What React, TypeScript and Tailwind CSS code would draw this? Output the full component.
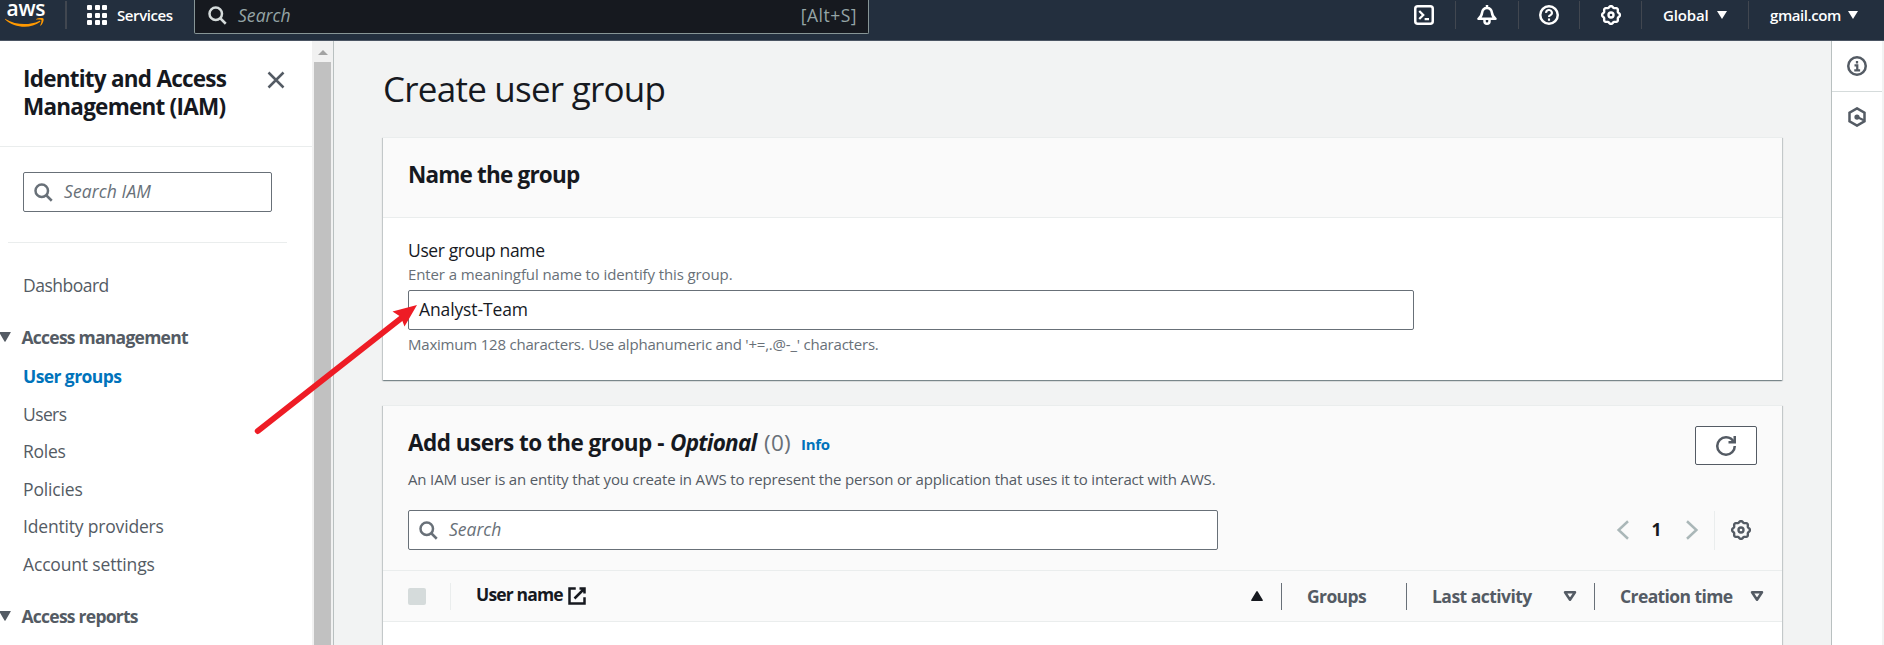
import React from "react";

type IconProps = { className?: string; children: React.ReactNode };

function Icon({ className = "size-5", children }: IconProps) {
  return (
    <svg viewBox="0 0 16 16" fill="none" stroke="currentColor" strokeWidth="2" className={`block shrink-0 ${className}`}>
      {children}
    </svg>
  );
}

const gearPath =
  Array.from({ length: 96 }, (_, i) => {
    const a = (i / 96) * Math.PI * 2;
    const r = 6.6 + 0.6 * Math.cos(8 * a);
    return `${i ? "L" : "M"}${(8 + r * Math.cos(a)).toFixed(2)} ${(8 + r * Math.sin(a)).toFixed(2)}`;
  }).join("") + "Z";

const Gear = () => (
  <Icon>
    <path d={gearPath} strokeWidth="1.9" strokeLinejoin="round" />
    <circle cx="8" cy="8" r="2" strokeWidth="1.9" />
  </Icon>
);

const SearchIcon = () => (
  <Icon>
    <circle cx="7" cy="7" r="5" />
    <path d="M10.6 10.6 15 15" />
  </Icon>
);

const SortDown = () => (
  <Icon>
    <path d="M4 5h8l-4 6z" strokeLinejoin="round" />
  </Icon>
);

function Logo() {
  return (
    <div className="ml-[5px] h-[30px] w-[39px] shrink-0">
      <div className="pl-[1.5px] pt-px text-[21px] font-semibold leading-[14px] tracking-[-0.3px]">aws</div>
      <svg viewBox="0 0 39 10" className="mt-[3px] block h-[10px] w-[39px]" fill="#ff9900">
        <path d="M.4.9C11 7.2 24 7.6 34.2 2.9c.9-.3 1.6.6.8 1.2C25.5 11.2 9.5 10.2.1 1.5-.2 1.1.1.7.4.9z" />
        <path d="M31.2.9C33.7-.3 37.6-.3 38.4.4c.8 1-.4 5.2-2.5 7.1-.5.4-.8.2-.6-.3.7-1.7 1.5-4.3 1.1-5.1-.4-.8-3.3-.7-4.9-.6-.6.1-.8-.3-.3-.6z" />
      </svg>
    </div>
  );
}

const Caret = () => (
  <svg viewBox="0 0 10 8" className="block h-2 w-[10px]" fill="currentColor">
    <path d="M0 0h10L5 8z" />
  </svg>
);

function HeaderCell({ className, children }: { className: string; children: React.ReactNode }) {
  return (
    <div className={`flex h-7 shrink-0 items-center border-l border-[#414750] ${className}`}>{children}</div>
  );
}

function TopBar() {
  return (
    <header className="flex h-[41px] items-start border-b border-[#4b5563] bg-[#232f3e] text-[15px] font-semibold text-white">
      <Logo />
      <div className="ml-[21px] mt-px h-7 w-[2px] bg-[#414750]" />
      <div className="ml-5 mt-[5px] grid size-5 shrink-0 grid-cols-3 gap-[2.5px]">
        {Array.from({ length: 9 }, (_, i) => (
          <span key={i} className="rounded-[1px] bg-white" />
        ))}
      </div>
      <span className="ml-[10px] mt-[5px] w-[77px] leading-[21px] tracking-[-0.4px]">Services</span>
      <div className="flex h-[34px] w-[675px] shrink-0 rounded-b-[2px] border border-t-0 border-[#879596] bg-[#16191f] pl-3 pr-[11px] pt-[5px] text-[17.5px] font-normal leading-[20px] text-[#95a5a6]">
        <span className="text-[#d5dbdb]"><SearchIcon /></span>
        <span className="ml-[11px] italic tracking-[0.05px]">Search</span>
        <span className="ml-auto tracking-[0.5px]">[Alt+S]</span>
      </div>
      <nav className="ml-auto mt-px flex">
        <div className="flex h-7 w-[41px] items-center">
          <Icon>
            <rect x="1" y="1" width="14" height="14" rx="2" />
            <path d="M4.2 4.8 7.4 8l-3.2 3.2M8.5 11.2H12" strokeWidth="1.8" />
          </Icon>
        </div>
        <HeaderCell className="w-[63px] pl-[21px]">
          <Icon>
            <path d="M1.2 11h13.6c-2-1.3-2.6-2.7-2.9-5C11.6 3.6 10.2 2.3 8 2.3S4.4 3.6 4.1 6c-.3 2.3-.9 3.7-2.9 5zM8 0v2" strokeLinejoin="round" />
            <path d="M6 11.5V13a2 2 0 0 0 4 0v-1.5" />
          </Icon>
        </HeaderCell>
        <HeaderCell className="w-[61px] pl-5">
          <Icon>
            <circle cx="8" cy="8" r="7" />
            <path d="M5.7 6.3A2.3 2.2 0 1 1 9 8.2c-.7.3-1 .6-1 1.4M8 10.7v1.8" strokeWidth="1.7" />
          </Icon>
        </HeaderCell>
        <HeaderCell className="w-[62px] pl-[21px]"><Gear /></HeaderCell>
        <HeaderCell className="w-[107px] gap-2 pl-[21px]">
          <span className="tracking-[-0.15px]">Global</span>
          <Caret />
        </HeaderCell>
        <HeaderCell className="w-[136px] gap-[7px] pl-[21px]">
          <span className="tracking-[-0.43px]">gmail.com</span>
          <Caret />
        </HeaderCell>
      </nav>
    </header>
  );
}

function Section({ className, children }: { className: string; children: React.ReactNode }) {
  return (
    <div className={`flex h-[37.5px] items-center font-bold tracking-[-0.75px] ${className}`}>
      <svg viewBox="0 0 12 10" className="-ml-px mr-[10.5px] block h-[10px] w-3" fill="currentColor">
        <path d="M.5 0h11q.5 0 .2.5L6.5 9.500q-.5.5-1 0L.3.500Q0 0 .5 0z" />
      </svg>
      {children}
    </div>
  );
}

const item = "flex h-[37.5px] items-center pl-[23px]";

function Sidebar() {
  return (
    <aside className="flex w-[334px] shrink-0 border-r border-[#b9c0c0] bg-white">
      <div className="w-[312px] text-[#545b64]">
        <div className="flex h-[106px] items-start justify-between border-b border-[#eaeded] pl-[23px] pr-[26px] pt-6">
          <h2 className="w-[215px] text-[22.5px] font-bold leading-7 tracking-[-0.76px] text-[#16191f]">
            Identity and Access Management (IAM)
          </h2>
          <Icon className="mt-[5px] size-5">
            <path d="M2 2l12 12M14 2 2 14" />
          </Icon>
        </div>
        <div className="ml-[23px] mt-[25px] flex h-10 w-[249px] items-center rounded-[2px] border border-[#687078] pl-[9px] text-[#687078]">
          <SearchIcon />
          <span className="ml-[11px] pb-px italic tracking-[0.1px]">Search IAM</span>
        </div>
        <div className="ml-2 mt-[30px] h-px w-[279px] bg-[#eaeded]" />
        <div className={`${item} mt-[23.5px] tracking-[-0.5px]`}>Dashboard</div>
        <Section className="mt-[14.5px]">Access management</Section>
        <div className={`${item} mt-[1.5px] font-bold tracking-[-0.58px] text-[#0073bb]`}>User groups</div>
        <div className={`${item} tracking-[-0.6px]`}>Users</div>
        <div className={`${item} tracking-[-0.27px]`}>Roles</div>
        <div className={`${item} tracking-[-0.15px]`}>Policies</div>
        <div className={`${item} tracking-[-0.18px]`}>Identity providers</div>
        <div className={`${item} tracking-[-0.16px]`}>Account settings</div>
        <Section className="mt-[14.5px]">Access reports</Section>
      </div>
      <div className="flex w-[21px] flex-col items-center bg-[#f1f1f1]">
        <svg viewBox="0 0 10 5" className="mt-[9px] h-[5px] w-[10px]" fill="#a3a3a3">
          <path d="M5 0l5 5H0z" />
        </svg>
        <div className="mt-[7px] w-[17px] flex-1 bg-[#c1c1c1]" />
      </div>
    </aside>
  );
}

const card =
  "w-[1399px] border-t border-[#eaeded] bg-white shadow-[0_1px_1px_0_rgba(0,28,36,0.3),1px_1px_1px_0_rgba(0,28,36,0.15),-1px_1px_1px_0_rgba(0,28,36,0.15)]";

function NameCard() {
  return (
    <section className={`${card} mt-[25px] h-[243px]`}>
      <div className="h-[80px] border-b border-[#eaeded] bg-[#fafafa] pl-[25px] pt-[22px]">
        <h2 className="text-[22.5px] font-bold leading-[30px] tracking-[-0.81px]">Name the group</h2>
      </div>
      <div className="pl-[25px] pt-[20px]">
        <div className="leading-[25px] tracking-[-0.38px]">User group name</div>
        <div className="text-[15px] leading-[22px] tracking-[-0.11px] text-[#687078]">
          Enter a meaningful name to identify this group.
        </div>
        <div className="mt-[5px] flex h-10 w-[1006px] items-center rounded-[2px] border border-[#687078] pb-px pl-[10px] tracking-[-0.12px]">
          Analyst-Team
        </div>
        <div className="mt-[3px] text-[15px] leading-[22px] tracking-[-0.21px] text-[#687078]">
          Maximum 128 characters. Use alphanumeric and '+=,.@-_' characters.
        </div>
      </div>
    </section>
  );
}

function UsersCard() {
  return (
    <section className={`${card} mt-[25px] flex-1`}>
      <div className="h-[165px] border-b border-[#eaeded] bg-[#fafafa] pl-[25px] pr-[25px]">
        <div className="flex h-[104px] justify-between">
          <div className="pt-[21px]">
            <h2 className="flex h-[31px] items-center whitespace-pre text-[22.5px] font-bold leading-[31px]">
              <span className="w-[262px] tracking-[-0.53px]">Add users to the group -</span>
              <span className="w-[94px] italic tracking-[-0.76px]">Optional</span>
              <span className="w-[37px] font-normal tracking-[0.25px] text-[#687078]">(0)</span>
              <span className="pt-[4px] text-[15px] tracking-[-0.3px] text-[#0073bb]">Info</span>
            </h2>
            <p className="mt-[10px] text-[15px] leading-[22px] tracking-[-0.16px] text-[#545b64]">
              An IAM user is an entity that you create in AWS to represent the person or application that uses it to
              interact with AWS.
            </p>
          </div>
          <div className="mt-5 flex h-[39px] w-[62px] items-center justify-center rounded-[2px] border border-[#545b64] bg-white text-[#545b64]">
            <Icon>
              <path d="M10 5h5V0" />
              <path d="M15 8a6.957 6.957 0 0 1-7 7 6.957 6.957 0 0 1-7-7 6.957 6.957 0 0 1 7-7 6.87 6.87 0 0 1 6.3 4" />
            </Icon>
          </div>
        </div>
        <div className="flex h-10 items-center justify-between">
          <div className="flex h-10 w-[810px] items-center rounded-[2px] border border-[#687078] bg-white pl-[9px] text-[#687078]">
            <SearchIcon />
            <span className="ml-[11px] pb-px italic tracking-[0px]">Search</span>
          </div>
          <div className="flex h-[39px] items-center text-[#aab7b8]">
            <Icon>
              <path d="M12 1 4.5 8l7.5 7" />
            </Icon>
            <span className="w-[49px] pb-[2px] pr-[2px] text-center font-bold text-[#16191f]">1</span>
            <Icon>
              <path d="M4 1l7.5 7L4 15" />
            </Icon>
            <div className="ml-[12px] flex h-full items-center border-l border-[#eaeded] pl-4 pr-[6px] text-[#545b64]">
              <Gear />
            </div>
          </div>
        </div>
      </div>
      <div className="flex h-[51px] items-center border-b border-[#eaeded] bg-[#fafafa] pl-[25px] font-bold text-[#545b64]">
        <div className="h-[17px] w-[18px] rounded-[2px] bg-[#d5dbdb]" />
        <div className="ml-6 flex h-[27px] w-[831px] items-center border-l border-[#eaeded] pl-[25px] text-[#16191f]">
          <span className="w-[87.5px] whitespace-nowrap pb-[3px] tracking-[-0.84px]">User name</span>
          <Icon className="ml-[3px] size-5">
            <path d="M10 2h4v4M6 10l8-8M14 9.048V14H2V2h5" />
          </Icon>
          <svg viewBox="0 0 12 10" className="ml-auto mr-[18px] h-[10px] w-3" fill="currentColor">
            <path d="M6.7.5l5.1 8.6q.3.9-.5.9H.7q-.8 0-.5-.9L5.3.5q.7-.8 1.4 0z" />
          </svg>
        </div>
        <div className="flex h-[27px] w-[125px] items-center border-l border-[#687078] pl-[25px] tracking-[-0.62px]">Groups</div>
        <div className="flex h-[27px] w-[188px] items-center justify-between border-l border-[#687078] pl-[25px] pr-[14px]">
          <span className="tracking-[-0.53px]">Last activity</span>
          <SortDown />
        </div>
        <div className="flex h-[27px] w-[188px] items-center justify-between border-l border-[#687078] pl-[25px] pr-[15px]">
          <span className="tracking-[-0.6px]">Creation time</span>
          <SortDown />
        </div>
      </div>
    </section>
  );
}

export default function App() {
  return (
    <div className="relative flex h-[645px] w-[1884px] flex-col overflow-hidden bg-[#f2f3f3] font-['Open_Sans','Noto_Sans',sans-serif] text-[17.5px] text-[#16191f]">
      <TopBar />
      <div className="flex min-h-0 flex-1">
        <Sidebar />
        <main className="flex flex-1 flex-col pl-[49px] pt-[25px]">
          <h1 className="text-[35px] leading-[46px] tracking-[-0.76px]">Create user group</h1>
          <NameCard />
          <UsersCard />
        </main>
        <aside className="mr-[2px] flex w-[51px] flex-col items-center border-l border-[#b9c0c0] bg-white text-[#545b64]">
          <div className="flex h-[51px] w-full items-center justify-center border-b border-[#d5dbdb]">
            <Icon>
              <circle cx="8" cy="8" r="7" />
              <path d="M6 7.5h2.2v4M5.8 11.5h4.7M8 4v2" strokeWidth="1.8" />
            </Icon>
          </div>
          <div className="flex h-[50px] items-center">
            <Icon>
              <path d="M8 1.1l6 3.45v6.9l-6 3.45-6-3.45v-6.9z" />
              <circle cx="8" cy="8" r="2.1" fill="currentColor" stroke="none" />
              <path d="M8 8l5.5 2.6" strokeWidth="1.7" />
            </Icon>
          </div>
        </aside>
      </div>
      <svg viewBox="0 0 170 134" className="pointer-events-none absolute left-[250px] top-[302px] h-[134px] w-[170px]">
        <path d="M7.8 129 154 14" stroke="#ee1c25" strokeWidth="6" strokeLinecap="round" />
        <path d="M167 3 142.500 9.500 149.500 14 152 18 154.500 24.500z" fill="#ee1c25" />
      </svg>
    </div>
  );
}
